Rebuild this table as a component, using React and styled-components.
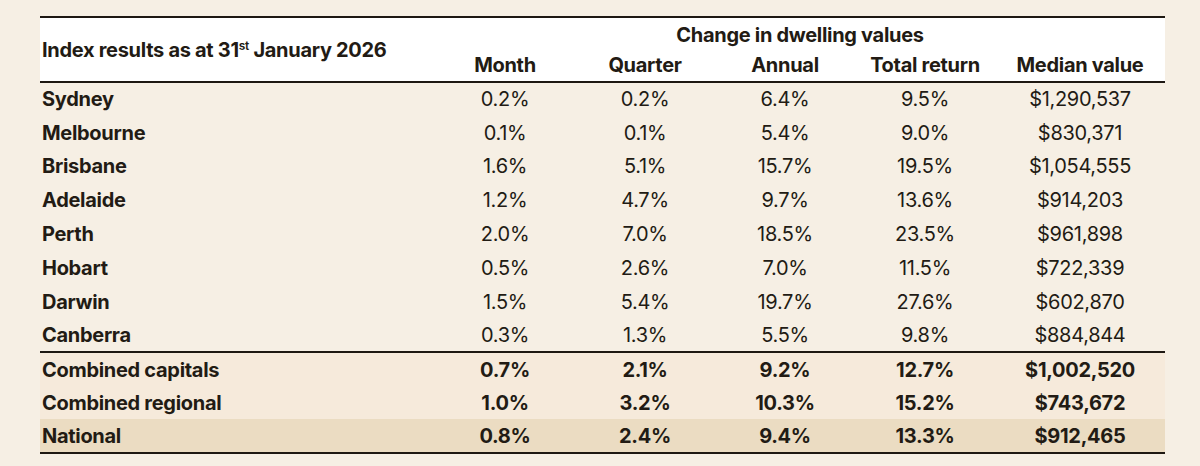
import styled, { createGlobalStyle } from "styled-components";

const GlobalStyle = createGlobalStyle`
  body {
    margin: 0;
    background: #f6efe4;
    font-family: "Inter", "Liberation Sans", Arial, sans-serif;
    color: #221b14;
  }
`;

const cities = [
  ["Sydney", "0.2%", "0.2%", "6.4%", "9.5%", "$1,290,537"],
  ["Melbourne", "0.1%", "0.1%", "5.4%", "9.0%", "$830,371"],
  ["Brisbane", "1.6%", "5.1%", "15.7%", "19.5%", "$1,054,555"],
  ["Adelaide", "1.2%", "4.7%", "9.7%", "13.6%", "$914,203"],
  ["Perth", "2.0%", "7.0%", "18.5%", "23.5%", "$961,898"],
  ["Hobart", "0.5%", "2.6%", "7.0%", "11.5%", "$722,339"],
  ["Darwin", "1.5%", "5.4%", "19.7%", "27.6%", "$602,870"],
  ["Canberra", "0.3%", "1.3%", "5.5%", "9.8%", "$884,844"],
];

const totals = [
  ["Combined capitals", "0.7%", "2.1%", "9.2%", "12.7%", "$1,002,520"],
  ["Combined regional", "1.0%", "3.2%", "10.3%", "15.2%", "$743,672"],
  ["National", "0.8%", "2.4%", "9.4%", "13.3%", "$912,465", true],
];

const App = () => {
  return (
    <Page>
      <GlobalStyle />
      <Table>
        <colgroup>
          <col style={{ width: 395 }} />
          <col style={{ width: 140 }} />
          <col style={{ width: 140 }} />
          <col style={{ width: 140 }} />
          <col style={{ width: 140 }} />
          <col />
        </colgroup>
        <Head>
          <tr>
            <TitleCell rowSpan={2}>
              Index results as at 31<sup>st</sup> January 2026
            </TitleCell>
            <GroupCell colSpan={5}>Change in dwelling values</GroupCell>
          </tr>
          <tr>
            <ColLabel>Month</ColLabel>
            <ColLabel>Quarter</ColLabel>
            <ColLabel>Annual</ColLabel>
            <ColLabel>Total return</ColLabel>
            <ColLabel>Median value</ColLabel>
          </tr>
        </Head>
        <tbody>
          {cities.map(([name, ...vals]) => (
            <Row key={name}>
              <NameCell>{name}</NameCell>
              {vals.map((v, i) => (
                <Value key={i}>{v}</Value>
              ))}
            </Row>
          ))}
        </tbody>
        <Totals>
          {totals.map(([name, a, b, c, d, e, national]) => (
            <TotalRow key={name} $national={national}>
              <NameCell>{name}</NameCell>
              {[a, b, c, d, e].map((v, i) => (
                <Value key={i} $bold>
                  {v}
                </Value>
              ))}
            </TotalRow>
          ))}
        </Totals>
      </Table>
    </Page>
  );
};

const Page = styled.div`
  width: 1200px;
  height: 466px;
  padding: 16px 0 0 40px;
  box-sizing: border-box;
`;

const Table = styled.table`
  width: 1125px;
  table-layout: fixed;
  border-collapse: collapse;
  font-size: 20px;
  letter-spacing: -0.015em;
  border-top: 2px solid #1e1812;
  border-bottom: 2px solid #1e1812;
`;

const Head = styled.thead`
  background: #ffffff;
  border-bottom: 2px solid #1e1812;
`;

const TitleCell = styled.th`
  text-align: left;
  padding: 0 0 0 2px;
  font-weight: 700;
  vertical-align: middle;

  sup {
    font-size: 12px;
    vertical-align: 7px;
    line-height: 0;
    font-weight: 600;
  }
`;

const GroupCell = styled.th`
  height: 30px;
  padding: 2px 0 0;
  font-weight: 700;
  text-align: center;
`;

const ColLabel = styled.th`
  height: 29px;
  padding: 0 0 2px;
  font-weight: 700;
  text-align: center;
`;

const Row = styled.tr`
  height: 33.8px;
`;

const NameCell = styled.td`
  padding: 0 0 0 2px;
  font-weight: 700;
`;

const Value = styled.td`
  text-align: center;
  padding: 0;
  font-weight: ${(p) => (p.$bold ? 700 : 400)};
`;

const Totals = styled.tbody`
  border-top: 2px solid #1e1812;
`;

const TotalRow = styled.tr`
  height: 33.5px;
  background: ${(p) => (p.$national ? "#ebdcc2" : "#f6eadb")};
`;

export default App;
